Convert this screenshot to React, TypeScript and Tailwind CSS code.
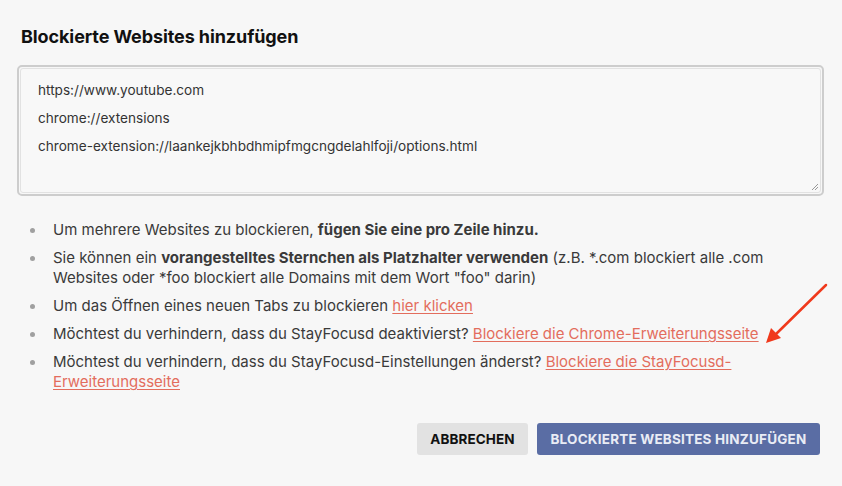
import React from "react";

export default function App() {
  const link = "text-[#e36d5d] underline underline-offset-2 decoration-1";
  return (
    <div
      className="relative w-[842px] h-[486px] bg-[#f7f7f7] text-[#333] overflow-hidden"
      style={{ fontFamily: "Inter, 'Noto Sans', sans-serif" }}
    >
      <div className="pl-[17px] pr-[18px] pt-[25px]">
        <h1 className="pl-[4px] text-[18px] leading-[24px] font-bold text-[#111] tracking-[-0.1px]">
          Blockierte Websites hinzufügen
        </h1>
        <div className="mt-[16px] h-[131px] rounded-[5px] border-2 border-[#cdcdcd] p-[1px] relative">
          <div className="h-full rounded-[3px] border border-[#e2e2e2] bg-[#f8f8f8] pl-[17px] pt-[7px] text-[13.6px] leading-[28px] text-[#333]">
            <div>https://www.youtube.com</div>
            <div>chrome://extensions</div>
            <div>chrome-extension://laankejkbhbdhmipfmgcngdelahlfoji/options.html</div>
          </div>
          <svg className="absolute right-[3px] bottom-[3px]" width="8" height="8" viewBox="0 0 8 8">
            <path d="M1 7 L7 1 M4 7 L7 4" stroke="#999" strokeWidth="1" />
          </svg>
        </div>
        <ul className="mt-[24px] pl-[36px] text-[15px] leading-[20px] text-[#3a3a3a] flex flex-col gap-[8px]">
          {[
            <>Um mehrere Websites zu blockieren, <b>fügen Sie eine pro Zeile hinzu.</b></>,
            <>Sie können ein <b>vorangestelltes Sternchen als Platzhalter verwenden</b> (z.B. *.com blockiert alle .com Websites oder *foo blockiert alle Domains mit dem Wort "foo" darin)</>,
            <>Um das Öffnen eines neuen Tabs zu blockieren <span className={link}>hier klicken</span></>,
            <>Möchtest du verhindern, dass du StayFocusd deaktivierst? <span className={link}>Blockiere die Chrome-Erweiterungsseite</span></>,
            <>Möchtest du verhindern, dass du StayFocusd-Einstellungen änderst? <span className={link}>Blockiere die StayFocusd-Erweiterungsseite</span></>,
          ].map((c, i) => (
            <li key={i} className="relative">
              <span className="absolute -left-[23px] top-[8px] w-[5px] h-[5px] rounded-full bg-[#a0a0a0]" />
              {c}
            </li>
          ))}
        </ul>
        <div className="mt-[31px] pr-[4px] flex justify-end gap-[9px]">
          <button className="h-[32px] w-[111px] rounded-[3px] bg-[#e2e2e2] text-[13.5px] font-bold text-[#111] tracking-[0.1px]">
            ABBRECHEN
          </button>
          <button className="h-[32px] w-[283px] rounded-[3px] bg-[#5a6da4] text-[13.5px] font-bold text-[#e9ecf5] tracking-[0.2px]">
            BLOCKIERTE WEBSITES HINZUFÜGEN
          </button>
        </div>
      </div>
      <svg className="absolute left-[760px] top-[278px]" width="75" height="70" viewBox="0 0 75 70">
        <line x1="66" y1="7" x2="14" y2="58" stroke="#f0391c" strokeWidth="2.5" strokeLinecap="round" />
        <polygon points="6,65 11,50 21,60" fill="#f0391c" />
      </svg>
    </div>
  );
}
